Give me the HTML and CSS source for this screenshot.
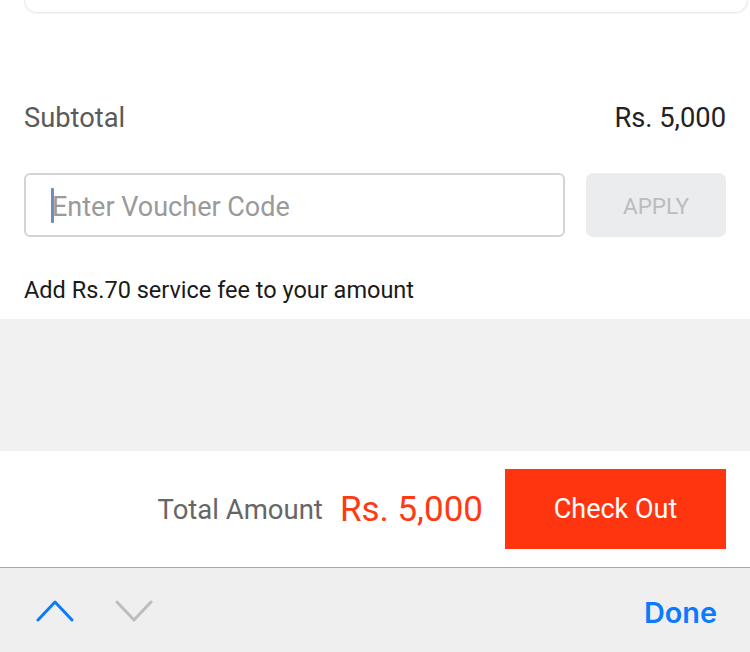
FILE: index.html
```html
<!DOCTYPE html>
<html>
<head>
<meta charset="utf-8">
<link rel="stylesheet" href="styles.css">
</head>
<body>
<div class="page">
  <div class="card-tail"></div>
  <div class="subtotal">
    <span class="sub-label">Subtotal</span>
    <span class="sub-value">Rs. 5,000</span>
  </div>
  <div class="voucher">
    <div class="voucher-input"><span class="caret"></span><span class="placeholder">Enter Voucher Code</span></div>
    <div class="apply">APPLY</div>
  </div>
  <div class="note">Add Rs.70 service fee to your amount</div>
  <div class="spacer"></div>
  <div class="footer">
    <span class="total-label">Total Amount</span>
    <span class="total-value">Rs. 5,000</span>
    <div class="checkout">Check Out</div>
  </div>
  <div class="toolbar">
    <div class="arrows">
      <svg class="chev" width="38" height="24" viewBox="0 0 38 24"><path d="M2 21 L19 3 L36 21" fill="none" stroke="#0a7aff" stroke-width="3" stroke-linecap="round" stroke-linejoin="round"/></svg>
      <svg class="chev" width="38" height="24" viewBox="0 0 38 24"><path d="M2 3 L19 21 L36 3" fill="none" stroke="#bdbdbd" stroke-width="3" stroke-linecap="round" stroke-linejoin="round"/></svg>
    </div>
    <span class="done">Done</span>
  </div>
</div>
</body>
</html>
```
FILE: styles.css
```css
html, body {
  margin: 0;
  padding: 0;
  background: #ffffff;
}
.page {
  width: 750px;
  height: 652px;
  font-family: Roboto, "Noto Sans", sans-serif;
  display: flex;
  flex-direction: column;
  overflow: hidden;
}
.card-tail {
  height: 12px;
  margin: 0 2px 0 24px;
  border: 1px solid #e9e9e9;
  border-top: none;
  border-radius: 0 0 14px 14px;
  box-shadow: 0 1px 2px rgba(0,0,0,0.05);
  flex: none;
}
.subtotal {
  display: flex;
  justify-content: space-between;
  align-items: center;
  padding: 0 24px;
  margin-top: 88px;
  height: 34px;
  font-size: 27.3px;
}
.sub-label { color: #5a5a5a; }
.sub-value { color: #222222; }
.voucher {
  display: flex;
  gap: 21px;
  padding: 0 24px;
  margin-top: 38px;
  height: 64px;
}
.voucher-input {
  flex: none;
  width: 541px;
  box-sizing: border-box;
  border: 2px solid #d4d4d4;
  border-radius: 6px;
  display: flex;
  align-items: center;
  padding-left: 24px;
  position: relative;
}
.caret {
  position: absolute;
  left: 25px;
  top: 13px;
  width: 3px;
  height: 35px;
  background: #6b8fbd;
  border-radius: 1px;
}
.placeholder {
  font-size: 27px;
  color: #9a9a9a;
  margin-left: 2px;
  padding-top: 3px;
}
.apply {
  flex: 1;
  background: #ebecee;
  border-radius: 7px;
  display: flex;
  align-items: center;
  justify-content: center;
  font-size: 22.5px;
  color: #bcbcbc;
  padding-top: 2px;
}
.note {
  padding: 0 24px;
  margin-top: 38px;
  font-size: 23.5px;
  color: #1a1a1a;
  height: 30px;
  line-height: 30px;
}
.spacer {
  margin-top: 14px;
  height: 132px;
  background: #f1f1f1;
  flex: none;
}
.footer {
  height: 116px;
  flex: none;
  background: #ffffff;
  display: flex;
  align-items: center;
  justify-content: flex-end;
  padding-right: 24px;
  border-bottom: 1px solid #a8a8a8;
}
.total-label {
  font-size: 27.5px;
  color: #666666;
  margin-right: 17px;
}
.total-value {
  font-size: 35px;
  color: #ff3a12;
  margin-right: 22px;
}
.checkout {
  width: 221px;
  height: 80px;
  background: #ff3510;
  color: #ffffff;
  font-size: 27px;
  display: flex;
  align-items: center;
  justify-content: center;
}
.toolbar {
  flex: 1;
  background: #efefef;
  display: flex;
  align-items: center;
  justify-content: space-between;
  padding: 0 33px 0 36px;
}
.arrows {
  display: flex;
  gap: 41px;
  margin-top: 2px;
}
.chev { display: block; }
.done {
  font-family: Inter, Roboto, sans-serif;
  font-size: 28.8px;
  font-weight: 600;
  color: #0a7aff;
  margin-top: 4px;
}
```
